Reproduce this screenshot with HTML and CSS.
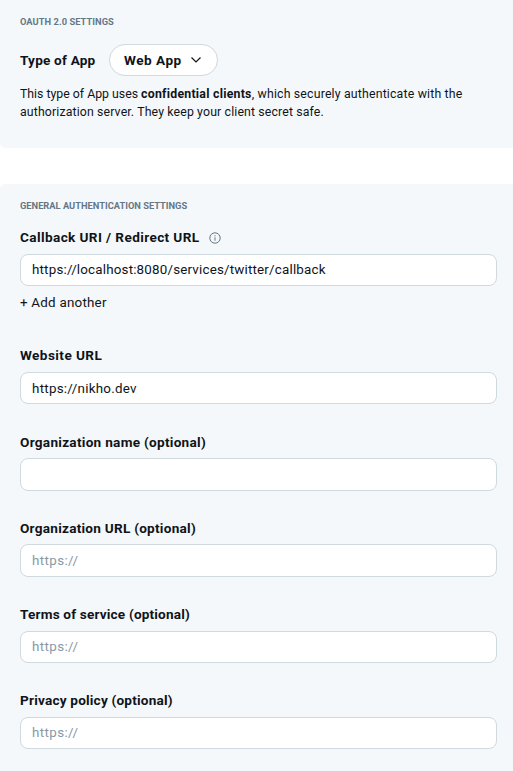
FILE: index.html
```html
<!DOCTYPE html>
<html lang="en">
<head>
<meta charset="utf-8">
<title>Authentication settings</title>
<link rel="stylesheet" href="styles.css">
</head>
<body>
<section class="panel oauth">
  <h2 class="heading">OAUTH 2.0 SETTINGS</h2>
  <div class="type-row">
    <span class="label type-label">Type of App</span>
    <button class="select" type="button"><span>Web App</span>
      <svg class="chevron" viewBox="0 0 12 8" aria-hidden="true"><path d="M1.500 1.500 6 6l4.500-4.500"/></svg>
    </button>
  </div>
  <p class="description">This type of App uses <b>confidential clients</b><span class="line-one">, which securely authenticate with the</span><br><span class="line-two">authorization server. They keep your client secret safe.</span></p>
</section>
<section class="panel general">
  <h2 class="heading">GENERAL AUTHENTICATION SETTINGS</h2>
  <div class="field callback">
    <div class="label-row">
      <label class="label callback-label" for="callback">Callback URI / Redirect URL</label>
      <svg class="info" viewBox="0 0 12 12" aria-hidden="true"><circle cx="6" cy="6" r="5.200"/><path d="M6 5.300v3.400M6 3.200v1.100"/></svg>
    </div>
    <input class="input callback-input" id="callback" type="text" value="https://localhost:8080/services/twitter/callback">
    <a class="add">+ Add another</a>
  </div>
  <div class="field">
    <label class="label website-label" for="website">Website URL</label>
    <input class="input" id="website" type="text" value="https://nikho.dev">
  </div>
  <div class="field">
    <label class="label org-label" for="org">Organization name (optional)</label>
    <input class="input" id="org" type="text">
  </div>
  <div class="field">
    <label class="label org-url-label" for="org-url">Organization URL (optional)</label>
    <input class="input" id="org-url" type="text" placeholder="https://">
  </div>
  <div class="field">
    <label class="label terms-label" for="terms">Terms of service (optional)</label>
    <input class="input" id="terms" type="text" placeholder="https://">
  </div>
  <div class="field">
    <label class="label privacy-label" for="privacy">Privacy policy (optional)</label>
    <input class="input" id="privacy" type="text" placeholder="https://">
  </div>
</section>
</body>
</html>
```
FILE: styles.css
```css
* { box-sizing: border-box; }
body {
  margin: 0;
  height: 771px;
  overflow: hidden;
  background: #fff;
  color: #0f1419;
  font-family: Roboto, "Liberation Sans", sans-serif;
}
.panel { background: #f5f8fb; padding: 0 16px 0 20px; }
.oauth { height: 148px; padding-top: 16px; border-radius: 0 0 0 5px; }
.general { height: 587px; margin-top: 36px; padding-top: 16px; border-radius: 5px 0 0 0; }
.heading {
  margin: 0;
  font-size: 9.3px;
  line-height: 12px;
  font-weight: 700;
  color: #657786;
  white-space: nowrap;
}
.oauth .heading { letter-spacing: 0.05px; }
.type-row { display: flex; align-items: center; gap: 13px; margin-top: 16px; height: 32px; }
.label { font-size: 13.6px; line-height: 21px; font-weight: 700; white-space: nowrap; }
.type-label { width: 76px; letter-spacing: 0.2px; }
.select {
  display: flex;
  align-items: center;
  justify-content: space-between;
  width: 109px;
  height: 32px;
  padding: 0 15px 0 14px;
  border: 1px solid #cfd9de;
  border-radius: 16px;
  background: #fff;
  color: inherit;
  font: 700 13.6px/21px Roboto, "Liberation Sans", sans-serif;
  letter-spacing: 0.5px;
}
.chevron { width: 12px; height: 8px; fill: none; stroke: #0f1419; stroke-width: 1.2; }
.description { margin: 9px 0 0; font-size: 12.3px; line-height: 18px; white-space: nowrap; }
.description b { letter-spacing: 0.25px; }
.line-one { letter-spacing: 0.18px; }
.line-two { letter-spacing: 0.14px; }
.field { display: flex; flex-direction: column; gap: 6px; height: 59.2px; margin-bottom: 27px; }
.callback { height: 91px; margin-top: 15px; }
.label-row { display: flex; align-items: center; gap: 10px; height: 21px; }
.callback-label { width: 179px; letter-spacing: 0.39px; }
.website-label { letter-spacing: 0.42px; }
.org-label,
.org-url-label { padding-top: 1px; line-height: 20px; }
.org-label { letter-spacing: 0.28px; }
.org-url-label { letter-spacing: 0.25px; }
.terms-label { letter-spacing: 0.18px; }
.privacy-label { letter-spacing: 0.2px; }
.info { width: 12px; height: 12px; fill: none; stroke: #657786; stroke-width: 1; }
.input {
  width: 100%;
  height: 32.4px;
  flex: none;
  padding: 0 11px;
  border: 1px solid #cfd9de;
  border-radius: 8px;
  background: #fff;
  color: #0f1419;
  font: 400 13.4px/20px Roboto, "Liberation Sans", sans-serif;
  letter-spacing: 0.26px;
}
.callback-input { height: 32px; padding-bottom: 1px; letter-spacing: 0.18px; }
.input::placeholder { color: #8899a6; opacity: 1; letter-spacing: 0.37px; }
.add { padding-top: 1px; font-size: 13.4px; line-height: 20px; letter-spacing: 0.22px; }
```
